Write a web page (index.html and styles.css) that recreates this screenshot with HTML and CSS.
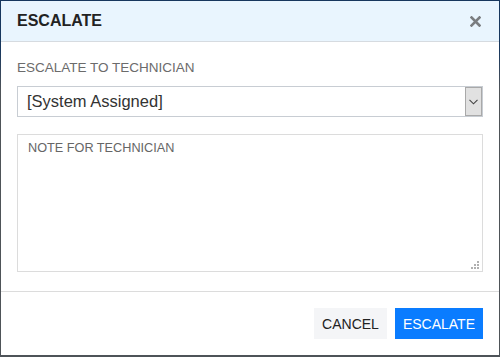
FILE: index.html
```html
<!DOCTYPE html>
<html lang="en">
<head>
    <meta charset="UTF-8">
    <meta name="viewport" content="width=device-width, initial-scale=1.0">
    <title>Escalate</title>
    <link rel="stylesheet" href="styles.css">
</head>
<body>
    <div class="modal">
        <!-- 标题栏 -->
        <div class="modal-header">
            <h2 class="modal-title">ESCALATE</h2>
            <button class="close-btn" aria-label="Close">
                <svg width="11" height="11" viewBox="0 0 11 11">
                    <path d="M1.5 1.5 L9.5 9.5 M9.5 1.5 L1.5 9.5" stroke="#7a7d80" stroke-width="2.6" stroke-linecap="square"/>
                </svg>
            </button>
        </div>

        <!-- 内容 -->
        <div class="modal-body">
            <label class="field-label" for="tech">ESCALATE TO TECHNICIAN</label>
            <div class="select-box" id="tech">
                <span class="select-value">[System Assigned]</span>
                <span class="select-arrow">
                    <svg width="9" height="6" viewBox="0 0 9 6">
                        <path d="M0.5 0.8 L4.5 4.8 L8.5 0.8" fill="none" stroke="#444" stroke-width="1.1"/>
                    </svg>
                </span>
            </div>
            <div class="note-wrap">
                <textarea class="note" placeholder="NOTE FOR TECHNICIAN"></textarea>
                <svg class="grip" width="8" height="8" viewBox="0 0 8 8">
                    <rect x="6" y="0" width="2" height="2"/>
                    <rect x="3" y="3" width="2" height="2"/>
                    <rect x="6" y="3" width="2" height="2"/>
                    <rect x="0" y="6" width="2" height="2"/>
                    <rect x="3" y="6" width="2" height="2"/>
                    <rect x="6" y="6" width="2" height="2"/>
                </svg>
            </div>
        </div>

        <!-- 按钮 -->
        <div class="modal-footer">
            <button class="btn btn-cancel">CANCEL</button>
            <button class="btn btn-primary">ESCALATE</button>
        </div>
    </div>
</body>
</html>
```

FILE: styles.css
```css
/* 全局样式 */
* {
    box-sizing: border-box;
}

body {
    margin: 0;
    padding: 1px;
    height: 357px;
    font-family: "Liberation Sans", Arial, sans-serif;
    background: linear-gradient(#17375e 0, #17375e 50px, #4e5358 90px);
    color: #333;
}

/* 弹窗 */
.modal {
    background-color: #fff;
    width: 498px;
}

.modal-header {
    height: 41px;
    display: flex;
    align-items: center;
    justify-content: space-between;
    padding: 0 16px 0 16px;
    background-color: #e9f5fe;
    border-bottom: 1px solid #d6dbe0;
}

.modal-title {
    margin: 0;
    font-size: 16px;
    font-weight: bold;
    color: #222;
}

.close-btn {
    border: none;
    background: none;
    padding: 0;
    margin-right: 2px;
    display: flex;
    cursor: pointer;
}

.modal-body {
    padding: 16px 16px 19px 16px;
    border-bottom: 1px solid #dcdcdc;
}

.field-label {
    display: block;
    font-size: 13.5px;
    line-height: 20px;
    color: #6b6b6b;
    margin-bottom: 8px;
}

/* 下拉框 */
.select-box {
    height: 31px;
    display: flex;
    align-items: center;
    justify-content: space-between;
    border: 1px solid #c8cdd3;
    padding: 0 0 0 9px;
}

.select-value {
    font-size: 16.5px;
    color: #333;
}

.select-arrow {
    width: 17px;
    height: 29px;
    display: flex;
    align-items: center;
    justify-content: center;
    background-color: #e1e1e1;
    border: 1px solid #a9a9a9;
}

/* 备注 */
.note-wrap {
    position: relative;
    margin-top: 17px;
    height: 138px;
}

.note {
    display: block;
    width: 100%;
    height: 100%;
    resize: none;
    border: 1px solid #dcdcdc;
    padding: 6px 10px;
    font-family: "Liberation Sans", Arial, sans-serif;
    font-size: 12.7px;
    outline: none;
}

.note::placeholder {
    color: #666;
}

.grip {
    position: absolute;
    right: 4px;
    bottom: 3px;
    fill: #b0b0b0;
}

/* 底部按钮 */
.modal-footer {
    display: flex;
    justify-content: flex-end;
    gap: 8px;
    padding: 16px 16px 16px 16px;
}

.btn {
    height: 31px;
    padding: 0 8px;
    border: none;
    font-family: "Liberation Sans", Arial, sans-serif;
    font-size: 14px;
    cursor: pointer;
}

.btn-cancel {
    background-color: #f4f5f7;
    color: #222;
}

.btn-primary {
    background-color: #0a7cff;
    color: #fff;
}
```
